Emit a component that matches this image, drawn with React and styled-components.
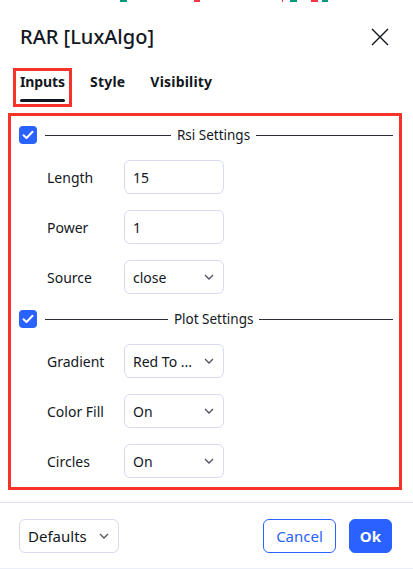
import React from 'react';
import styled, { createGlobalStyle } from 'styled-components';

const GlobalStyle = createGlobalStyle`
  body {
    margin: 0;
    background: #ffffff;
    font-family: "Noto Sans", "Liberation Sans", sans-serif;
    color: #131722;
  }
`;

const Dialog = styled.div`
  width: 413px;
  height: 569px;
  display: flex;
  flex-direction: column;
  box-sizing: border-box;
  border-bottom: 1px solid #eceef8;
  overflow: hidden;
`;

const Header = styled.div`
  display: flex;
  align-items: center;
  justify-content: space-between;
  height: 30px;
  padding: 19px 24px 0 20px;
`;

const Title = styled.h1`
  margin: 0;
  font-size: 20px;
  font-weight: 500;
  line-height: 30px;
  color: #131722;
`;

const CloseButton = styled.button`
  border: 0;
  padding: 0;
  background: none;
  width: 18px;
  height: 18px;
  display: flex;
  color: #131722;
`;

const TabBar = styled.div`
  display: flex;
  gap: 11px;
  margin: 16px 0 0 13px;
`;

const Tab = styled.div`
  box-sizing: border-box;
  height: 39px;
  padding: 2px 4px 0;
  border: 3px solid ${p => (p.$marked ? '#f5332a' : 'transparent')};
  display: flex;
  flex-direction: column;
  font-size: 14px;
  font-weight: 700;
  line-height: 18px;
  letter-spacing: ${p => (p.$marked ? '-0.1px' : '0.2px')};
  color: #131722;
`;

const TabLine = styled.span`
  display: block;
  margin-top: 8px;
  height: 3px;
  border-radius: 2px;
  background: ${p => (p.$active ? '#131722' : 'transparent')};
`;

const Panel = styled.div`
  margin: 6px 11px 0 8px;
  border: 3px solid #f5332a;
  padding: 10px 6px 9px 8px;
  display: flex;
  flex-direction: column;
  gap: 16px;
`;

const SectionHead = styled.div`
  display: flex;
  align-items: center;
  height: 18px;
  gap: 8px;
`;

const Check = styled.span`
  width: 18px;
  height: 18px;
  flex: none;
  border-radius: 4px;
  background: #2962ff;
  display: flex;
  align-items: center;
  justify-content: center;
`;

const Rule = styled.span`
  flex: ${p => p.$grow || 1};
  height: 1px;
  background: #2a2e39;
`;

const SectionTitle = styled.span`
  font-size: 13.5px;
  line-height: 18px;
  color: #131722;
  margin: 0 -2px;
`;

const Row = styled.div`
  display: flex;
  align-items: center;
  padding-left: 28px;
`;

const Label = styled.span`
  width: 77px;
  font-size: 14px;
  color: #131722;
`;

const Field = styled.div`
  box-sizing: border-box;
  width: ${p => p.$width || 100}px;
  height: 34px;
  border: 1px solid #d8daf2;
  border-radius: 6px;
  padding: 0 9px 0 8px;
  display: flex;
  align-items: center;
  justify-content: space-between;
  font-size: ${p => p.$size || 14}px;
  color: #131722;
`;

const Footer = styled.div`
  margin-top: 12px;
  border-top: 1px solid #dcdff5;
  padding: 16px 21px 0 19px;
  display: flex;
  align-items: center;
  justify-content: space-between;
`;

const Actions = styled.div`
  display: flex;
  gap: 13px;
`;

const Button = styled.button`
  box-sizing: border-box;
  height: 34px;
  padding: 0 ${p => (p.$primary ? 10 : 12)}px;
  border-radius: 6px;
  border: 1px solid #2962ff;
  background: ${p => (p.$primary ? '#2962ff' : '#ffffff')};
  color: ${p => (p.$primary ? '#ffffff' : '#2962ff')};
  font-family: inherit;
  font-size: 15px;
  font-weight: ${p => (p.$primary ? 700 : 400)};
`;

const Candles = () => (
  <svg width="413" height="3" style={{ display: 'block' }}>
    <rect x="120" y="0" width="7" height="2" fill="#089981" />
    <rect x="194" y="0" width="6" height="2" fill="#f23645" />
    <rect x="282" y="0" width="1" height="2" fill="#f23645" />
    <rect x="290" y="0" width="7" height="2" fill="#089981" />
    <rect x="311" y="0" width="7" height="2" fill="#f23645" />
    <rect x="322" y="0" width="6" height="2" fill="#089981" />
  </svg>
);

const Chevron = () => (
  <svg width="10" height="6" viewBox="0 0 10 6">
    <path d="M1 1l4 4 4-4" fill="none" stroke="#50535e" strokeWidth="1.3" />
  </svg>
);

const Tick = () => (
  <svg width="12" height="10" viewBox="0 0 12 10">
    <path d="M1.5 5.2l3 2.8 6-6.3" fill="none" stroke="#fff" strokeWidth="2" strokeLinecap="round" strokeLinejoin="round" />
  </svg>
);

const sections = [
  {
    title: 'Rsi Settings',
    rows: [
      { label: 'Length', value: '15' },
      { label: 'Power', value: '1' },
      { label: 'Source', value: 'close', select: true },
    ],
  },
  {
    title: 'Plot Settings',
    rows: [
      { label: 'Gradient', value: 'Red To ...', select: true },
      { label: 'Color Fill', value: 'On', select: true },
      { label: 'Circles', value: 'On', select: true },
    ],
  },
];

export default function App() {
  return (
    <>
      <GlobalStyle />
      <Dialog>
        <Candles />
        <Header>
          <Title>RAR [LuxAlgo]</Title>
          <CloseButton aria-label="Close">
            <svg width="18" height="18" viewBox="0 0 18 18">
              <path d="M1 1l16 16M17 1L1 17" stroke="#131722" strokeWidth="1.4" />
            </svg>
          </CloseButton>
        </Header>
        <TabBar>
          <Tab $marked>
            Inputs
            <TabLine $active />
          </Tab>
          <Tab>
            Style
            <TabLine />
          </Tab>
          <Tab>
            Visibility
            <TabLine />
          </Tab>
        </TabBar>
        <Panel>
          {sections.map(s => (
            <React.Fragment key={s.title}>
              <SectionHead>
                <Check>
                  <Tick />
                </Check>
                <Rule $grow={0.92} />
                <SectionTitle>{s.title}</SectionTitle>
                <Rule />
              </SectionHead>
              {s.rows.map(r => (
                <Row key={r.label}>
                  <Label>{r.label}</Label>
                  <Field>
                    <span>{r.value}</span>
                    {r.select && <Chevron />}
                  </Field>
                </Row>
              ))}
            </React.Fragment>
          ))}
        </Panel>
        <Footer>
          <Field $size={15}>
            <span>Defaults</span>
            <Chevron />
          </Field>
          <Actions>
            <Button>Cancel</Button>
            <Button $primary>Ok</Button>
          </Actions>
        </Footer>
      </Dialog>
    </>
  );
}
